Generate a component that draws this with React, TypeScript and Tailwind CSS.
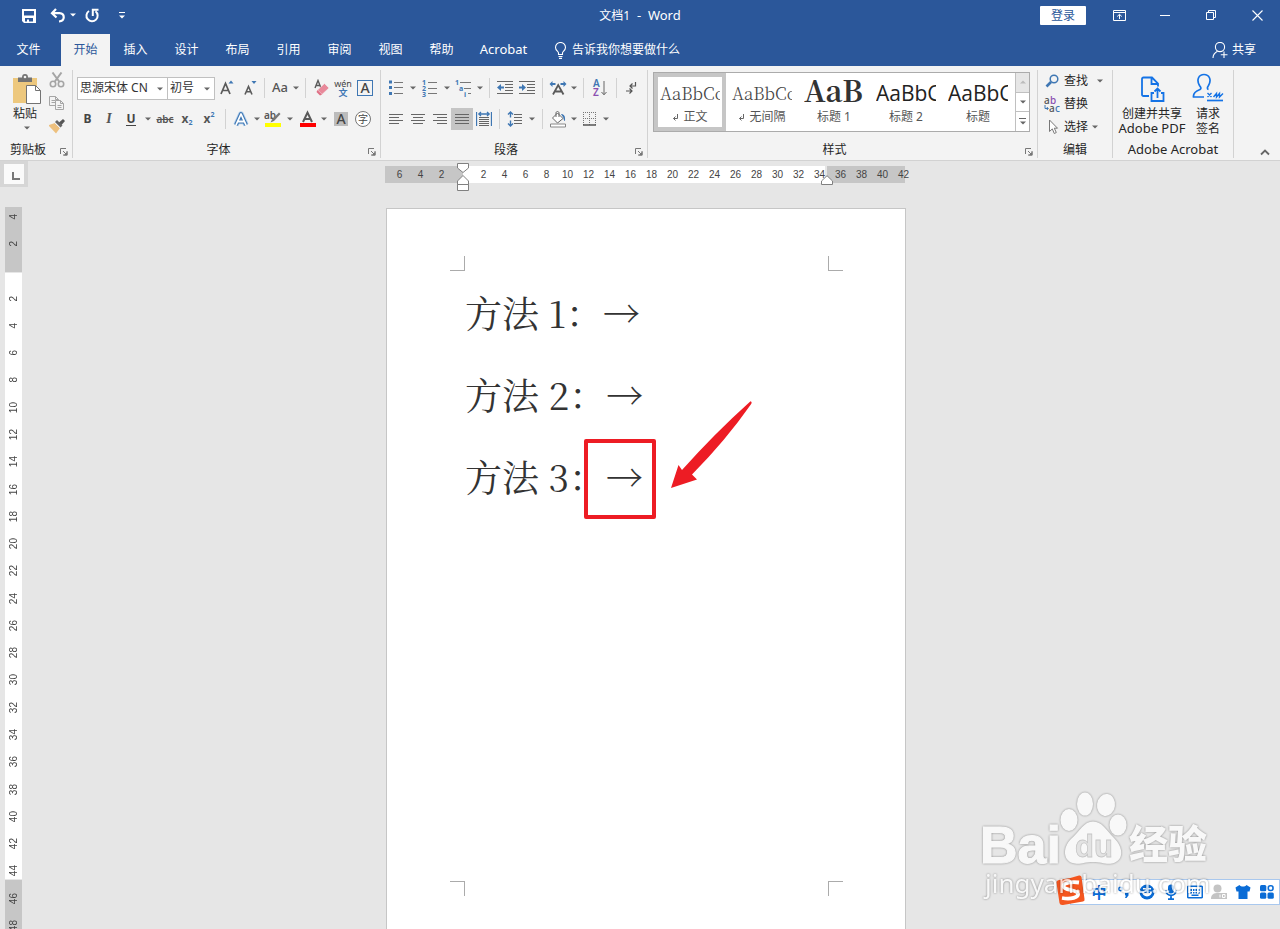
import React from "react";
import type { ReactNode } from "react";

const UI = "font-['Noto_Sans','Noto_Sans_CJK_SC',sans-serif]";

function Tri({ className = "" }: { className?: string }) {
  return (
    <svg width="6" height="4" viewBox="0 0 6 4" className={className} aria-hidden="true">
      <path d="M0 0.5h6L3 3.5z" fill="currentColor" />
    </svg>
  );
}

function Caret({ label, wide }: { label: string; wide?: boolean }) {
  return (
    <button
      aria-label={label}
      className={`flex h-[22px] shrink-0 items-center justify-center text-[#666] ${wide ? "w-3" : "w-[10px]"}`}
    >
      <Tri />
    </button>
  );
}

function Tool({ label, active, children }: { label: string; active?: boolean; children: ReactNode }) {
  return (
    <button
      aria-label={label}
      className={`flex h-[22px] w-[22px] shrink-0 items-center justify-center text-[#555] ${active ? "bg-[#c5c5c5]" : ""}`}
    >
      {children}
    </button>
  );
}

function Sep() {
  return <span className="mx-1 h-5 w-px shrink-0 bg-[#d2d2d2]" />;
}

function Group({
  title,
  width,
  launcher,
  children,
}: {
  title: string;
  width: string;
  launcher?: boolean;
  children: ReactNode;
}) {
  return (
    <section aria-label={title} className={`flex shrink-0 flex-col border-r border-[#d2d2d2] ${width}`}>
      <div className="min-h-0 flex-1">{children}</div>
      <div className="flex h-4 shrink-0 items-center">
        <span className="flex-1 text-center text-xs leading-4 text-[#262626]">{title}</span>
        {launcher && (
          <button aria-label={`${title}设置`} className="flex w-4 items-center justify-center pt-1">
            <svg width="8" height="8" viewBox="0 0 8 8" fill="none" stroke="#777">
              <path d="M0.5 6V0.5H6M3 3l3 3" />
              <path d="M7.5 3.5v4h-4z" fill="#777" stroke="none" />
              <path d="M7 3v4H3" />
            </svg>
          </button>
        )}
      </div>
    </section>
  );
}

function TitleBar() {
  return (
    <div className="grid h-[30px] grid-cols-[1fr_auto_1fr] items-center">
      <div className="flex items-center pl-[21px] text-white">
        <button aria-label="保存" className="flex w-4 justify-center">
          <svg width="16" height="16" viewBox="0 0 16 16">
            <path fill="white" fillRule="evenodd" d="M1 2h14v14H3L1 14zM3 4v4.500h10V4zM4 11v3.500h2v-2h2v2h4v-3.500z" />
          </svg>
        </button>
        <button aria-label="撤消" className="ml-[13px] flex w-4 justify-center">
          <svg width="16" height="16" viewBox="0 0 16 16" fill="none" stroke="white" strokeWidth="2.200">
            <path d="M6 2L2 6.200L6.500 10.500M2.500 6.200H9.500C15 6.500 15.500 14 9 14.500" />
          </svg>
        </button>
        <button aria-label="撤消选项" className="ml-[3px] flex w-2 justify-center">
          <Tri />
        </button>
        <button aria-label="重复" className="ml-[7px] flex w-4 justify-center">
          <svg width="16" height="16" viewBox="0 0 16 16" fill="none" stroke="white" strokeWidth="2">
            <path d="M5 4A5.600 5.600 0 1 0 11.500 4.300M8.800 9V2.700H14.500" />
          </svg>
        </button>
        <button aria-label="自定义快速访问工具栏" className="ml-[18px] flex w-2 flex-col items-center gap-[2px] pt-px">
          <span className="h-px w-[6px] bg-white" />
          <Tri />
        </button>
      </div>
      <h1 className="whitespace-pre text-[13px] leading-5 text-white">
        <span className="text-xs">文档1</span>
        {"  -  Word"}
      </h1>
      <div className="flex items-center justify-end">
        <button className="mr-[10px] h-[19px] w-[46px] rounded-[1px] bg-white text-xs leading-[19px] text-[#2b579a]">
          登录
        </button>
        <button aria-label="功能区显示选项" className="flex w-[46px] justify-center">
          <svg width="13" height="11" viewBox="0 0 13 11" fill="none" stroke="white">
            <path d="M0.500 0.500h12v10H0.500zM0.500 2.500h12M6.500 9V4.500M4.200 6.500L6.500 4.300l2.300 2.200" />
          </svg>
        </button>
        <button aria-label="最小化" className="flex h-4 w-[46px] items-center justify-center">
          <span className="h-px w-[10px] bg-white" />
        </button>
        <button aria-label="向下还原" className="flex w-[46px] justify-center">
          <svg width="10" height="10" viewBox="0 0 10 10" fill="none" stroke="white">
            <path d="M0.500 2.500h7v7h-7zM2.500 2.500v-2h7v7h-2" />
          </svg>
        </button>
        <button aria-label="关闭" className="flex w-[46px] justify-center">
          <svg width="11" height="11" viewBox="0 0 11 11" fill="none" stroke="white" strokeWidth="1.100">
            <path d="M0.500 0.500l10 10M10.500 0.500l-10 10" />
          </svg>
        </button>
      </div>
    </div>
  );
}

const TABS = ["插入", "设计", "布局", "引用", "审阅", "视图", "帮助"];

function TabBar() {
  return (
    <nav className="mt-1 flex h-8 items-stretch text-xs text-white">
      <button className="w-[57px]">文件</button>
      <button className="ml-1 w-[49px] bg-[#f3f3f3] text-[#2b579a]">开始</button>
      {TABS.map((t) => (
        <button key={t} className="w-[51px]">
          {t}
        </button>
      ))}
      <button className="w-[73px] text-[13px]">Acrobat</button>
      <button className="ml-[14px] flex items-center gap-[5px]">
        <svg width="13" height="17" viewBox="0 0 13 17" fill="none" stroke="white" strokeWidth="1.100">
          <path d="M4.500 12.500V11C4.500 9.500 1.500 8.500 1.500 5.500a5 5 0 0 1 10 0C11.500 8.500 8.500 9.500 8.500 11v1.500zM4.500 14.500h4M5 16.400h3" />
        </svg>
        告诉我你想要做什么
      </button>
      <button className="mr-6 ml-auto flex items-center gap-1">
        <svg width="16" height="17" viewBox="0 0 16 17" fill="none" stroke="white" strokeWidth="1.100">
          <circle cx="8" cy="5" r="4.600" />
          <path d="M1 16c0-4 2-5.500 4.500-6.800M12 9.500V16M8.800 12.700h6.700" />
        </svg>
        共享
      </button>
    </nav>
  );
}

function ClipboardGroup() {
  return (
    <Group title="剪贴板" width="w-[73px]" launcher>
      <div className="flex">
        <button className="flex w-[49px] flex-col items-center pt-1 pl-1 text-xs text-[#262626]">
          <svg width="30" height="31" viewBox="0 0 30 31">
            <path d="M1 4h24v25H1z" fill="#edc87e" />
            <path d="M6 8V3.500h4C10 1 11 0 13 0s3 1 3 3.500h4V8z" fill="#737373" />
            <circle cx="13" cy="3" r="1.300" fill="#f3f3f3" />
            <path d="M14.500 11.500h9l5 5v13h-14z" fill="white" stroke="#737373" />
            <path d="M23.500 11.500v5h5" fill="none" stroke="#737373" />
          </svg>
          <span className="pr-[3px] leading-[18px]">粘贴</span>
          <Tri className="mt-[3px] text-[#666]" />
        </button>
        <div className="flex flex-col gap-[7px] pt-[2px]">
          <button aria-label="剪切">
            <svg width="16" height="16" viewBox="0 0 16 16" fill="none" stroke="#a5a5a5" strokeWidth="1.600">
              <path d="M3.500 0.500L10.500 10M12.500 0.500L5.500 10" strokeWidth="2" />
              <circle cx="4" cy="12" r="2.700" />
              <circle cx="12" cy="12" r="2.700" />
            </svg>
          </button>
          <button aria-label="复制">
            <svg width="16" height="16" viewBox="0 0 16 16" fill="#f3f3f3" stroke="#a5a5a5">
              <path d="M0.500 1.500h6l3 3v6h-9zM6.500 1.500v3h3M2.500 5.500h4M2.500 7.500h4" />
              <path d="M6.500 5.500h5l3 3v6h-8zM11.500 5.500v3h3M8.500 10.500h4M8.500 12.500h4" />
            </svg>
          </button>
          <button aria-label="格式刷">
            <svg width="17" height="16" viewBox="0 0 17 16">
              <path d="M0 7l6-2 5 5-4 5.500L0 8z" fill="#edc07e" />
              <path d="M6 4l2-2 5.500 5.500-2 2z" fill="#666" />
              <path d="M10 4.500L14 1l2 2-3.500 4z" fill="#555" />
              <path d="M6 5l5 5" stroke="#f3f3f3" />
            </svg>
          </button>
        </div>
      </div>
    </Group>
  );
}

function ListSelect({ label, value, width }: { label: string; value: string; width: string }) {
  return (
    <div className={`relative flex h-[23px] items-center border border-[#c0c0c0] bg-white ${width}`}>
      <select
        aria-label={label}
        className="h-5 w-full appearance-none bg-transparent pr-3 pl-[2px] text-xs leading-4 text-[#333]"
        defaultValue={value}
      >
        <option>{value}</option>
      </select>
      <Tri className="pointer-events-none absolute top-[9px] right-1 text-[#666]" />
    </div>
  );
}

function FontGroup() {
  return (
    <Group title="字体" width="w-[308px]" launcher>
      <div className="flex flex-col gap-2 pt-[6px] pl-1">
        <div className="flex h-6 items-center">
          <ListSelect label="字体" value="思源宋体 CN" width="w-[91px]" />
          <ListSelect label="字号" value="初号" width="-ml-px w-12" />
          <button aria-label="增大字号" className="flex w-6 justify-center">
            <svg width="14" height="18" viewBox="0 0 14 18">
              <path d="M1 15L5.500 4.500L10 15M2.700 11.500h5.600" fill="none" stroke="#5a5a5a" strokeWidth="1.700" />
              <path d="M8.500 4.500h5L11 1.500z" fill="#3f77b3" />
            </svg>
          </button>
          <button aria-label="减小字号" className="flex w-[21px] justify-center">
            <svg width="14" height="18" viewBox="0 0 14 18">
              <path d="M2 15.500L5.500 7.500L9 15.500M3.200 12.700h4.600" fill="none" stroke="#5a5a5a" strokeWidth="1.600" />
              <path d="M8.500 2h5L11 5z" fill="#3f77b3" />
            </svg>
          </button>
          <Sep />
          <Tool label="更改大小写">
            <span className="text-[13px] font-medium text-[#555]">Aa</span>
          </Tool>
          <Caret label="大小写选项" />
          <Sep />
          <Tool label="清除所有格式">
            <svg width="18" height="18" viewBox="0 0 18 18">
              <path d="M3 9L6 1.500L9 9M4 6.500h4" fill="none" stroke="#5a5a5a" strokeWidth="1.400" />
              <path d="M12.500 4.500l4.500 4.500-7 6.500-4.500-4.500z" fill="#e8899a" stroke="#f3f3f3" strokeWidth="0.600" />
              <path d="M5.500 11l4.500 4.500-2 1L4.500 13z" fill="#df6f84" />
            </svg>
          </Tool>
          <Tool label="拼音指南">
            <span className="flex flex-col items-center">
              <span className="text-[9px] leading-[9px] text-[#444]">wén</span>
              <span className="text-[9px] leading-[9px] font-bold text-[#3f77b3]">文</span>
            </span>
          </Tool>
          <Tool label="字符边框">
            <span className="flex h-4 w-4 items-center justify-center border border-[#3f77b3] text-sm leading-4 font-medium text-[#444]">
              A
            </span>
          </Tool>
        </div>
        <div className="flex h-[22px] items-center">
          <button aria-label="加粗" className="w-[21px] text-xs font-bold text-[#444]">
            B
          </button>
          <Tool label="倾斜">
            <span className="font-['Liberation_Serif',serif] text-sm font-bold italic">I</span>
          </Tool>
          <Tool label="下划线">
            <span className="border-b border-[#444] text-xs leading-3 font-bold text-[#444]">U</span>
          </Tool>
          <Caret label="下划线选项" wide />
          <Tool label="删除线">
            <span className="text-[10px] font-semibold line-through">abc</span>
          </Tool>
          <Tool label="下标">
            <span className="flex items-end text-xs leading-4 font-bold">
              x<span className="text-[7px] leading-[8px] text-[#3f77b3]">2</span>
            </span>
          </Tool>
          <Tool label="上标">
            <span className="flex items-start text-xs leading-4 font-bold">
              x<span className="text-[7px] leading-[8px] text-[#3f77b3]">2</span>
            </span>
          </Tool>
          <span className="w-px" />
          <Sep />
          <Tool label="文本效果">
            <svg width="18" height="18" viewBox="0 0 18 18" fill="none" strokeLinejoin="round">
              <path d="M4 15L9 4L14 15M6 11.500h6" stroke="#b5d0ec" strokeWidth="5.500" />
              <path d="M4 15L9 4L14 15M6 11.500h6" stroke="#3f77b3" strokeWidth="4" />
              <path d="M4 15L9 4L14 15M6 11.500h6" stroke="white" strokeWidth="1.800" />
            </svg>
          </Tool>
          <Caret label="文本效果选项" />
          <Tool label="突出显示">
            <svg width="18" height="18" viewBox="0 0 18 18">
              <text x="0" y="9" fontSize="10" fontWeight="600" fill="#555">ab</text>
              <path d="M15 2.500l1.500 1.500-6.500 7-3.500 1.500 1.500-3z" fill="#777" />
              <path d="M1 13h16v4H1z" fill="#ff0" />
            </svg>
          </Tool>
          <Caret label="突出显示颜色" wide />
          <Tool label="字体颜色">
            <svg width="18" height="18" viewBox="0 0 18 18">
              <path d="M5 12L9.500 2.500L14 12M6.500 9h6" fill="none" stroke="#5a5a5a" strokeWidth="2" />
              <path d="M2 13h16v4H2z" fill="#f00" />
            </svg>
          </Tool>
          <Caret label="字体颜色选项" wide />
          <Tool label="字符底纹">
            <span className="flex h-[14px] w-[14px] items-center justify-center bg-[#bcbcbc] text-sm leading-[14px] font-medium text-[#444]">
              A
            </span>
          </Tool>
          <Tool label="带圈字符">
            <span className="flex h-4 w-4 items-center justify-center rounded-full border border-[#777] bg-white text-[10px] leading-3 text-[#444]">
              字
            </span>
          </Tool>
        </div>
      </div>
    </Group>
  );
}

function Lines({ d }: { d: string }) {
  return (
    <svg width="16" height="14" viewBox="0 0 16 14" fill="none" stroke="#666">
      <path d={d} />
    </svg>
  );
}

function ParagraphGroup() {
  return (
    <Group title="段落" width="w-[267px]" launcher>
      <div className="flex flex-col gap-2 pt-[6px] pl-1">
        <div className="flex h-6 items-center">
          <Tool label="项目符号">
            <svg width="14" height="16" viewBox="0 0 14 16">
              <path d="M0 0.500h3v3h-3zM0 6h3v3h-3zM0 12h3v3h-3z" fill="#3f77b3" />
              <path d="M5 2.500h9M5 7.500h9M5 13.500h9" stroke="#777" />
            </svg>
          </Tool>
          <Caret label="项目符号选项" wide />
          <Tool label="编号">
            <svg width="16" height="18" viewBox="0 0 16 18">
              <g fontSize="7" fontWeight="700" fill="#3f77b3">
                <text x="0" y="6">1</text>
                <text x="0" y="12">2</text>
                <text x="0" y="17.500">3</text>
              </g>
              <path d="M6 3.500h9M6 9.500h9M6 14.500h9" stroke="#777" />
            </svg>
          </Tool>
          <Caret label="编号选项" wide />
          <Tool label="多级列表">
            <svg width="18" height="18" viewBox="0 0 18 18">
              <g fontSize="7" fontWeight="700" fill="#3f77b3">
                <text x="0" y="6">1</text>
                <text x="4" y="12">a</text>
                <text x="9" y="17.500">i</text>
              </g>
              <path d="M5 3.500h11M9 9.500h7M13 14.500h3" stroke="#777" />
            </svg>
          </Tool>
          <Caret label="多级列表选项" />
          <Sep />
          <Tool label="减少缩进量">
            <svg width="16" height="14" viewBox="0 0 16 14">
              <path d="M0 0.500h16M8 3.500h8M8 6.500h8M8 9.500h8M0 12.500h16" stroke="#666" />
              <path d="M0 6.500L4 3v2.500h3v2H4V10z" fill="#3f77b3" />
            </svg>
          </Tool>
          <Tool label="增加缩进量">
            <svg width="16" height="14" viewBox="0 0 16 14">
              <path d="M0 0.500h16M8 3.500h8M8 6.500h8M8 9.500h8M0 12.500h16" stroke="#666" />
              <path d="M7 6.500L3 3v2.500H0v2h3V10z" fill="#3f77b3" />
            </svg>
          </Tool>
          <Sep />
          <Tool label="中文版式">
            <svg width="18" height="16" viewBox="0 0 18 16">
              <path d="M4 14.500L9.200 5L14.500 14.500M6 11.500h6.500" fill="none" stroke="#5a5a5a" strokeWidth="1.800" />
              <path d="M0.500 4l3-3v2h3v2h-3v2zM17.500 4l-3-3v2h-3v2h3v2z" fill="#3f77b3" />
            </svg>
          </Tool>
          <Caret label="中文版式选项" />
          <Sep />
          <button aria-label="排序" className="flex w-6 justify-center">
            <svg width="16" height="18" viewBox="0 0 16 18">
              <text x="1" y="8" fontSize="10" fontWeight="600" fill="#3f77b3">A</text>
              <text x="1" y="17" fontSize="10" fontWeight="600" fill="#8a4fb0">Z</text>
              <path d="M12 2v13.500M9.500 13l2.500 2.800L14.500 13" fill="none" stroke="#666" />
            </svg>
          </button>
          <Sep />
          <button aria-label="显示编辑标记" className="flex w-5 justify-center">
            <svg width="12" height="14" viewBox="0 0 12 14" fill="none" stroke="#555" strokeWidth="1.200">
              <path d="M10.500 1v4H5M7.500 2.500L5 5l2.500 2.500M1 10h6M4.500 7.500L7 10l-2.500 2.500" />
            </svg>
          </button>
        </div>
        <div className="flex h-[22px] items-center">
          <Tool label="左对齐">
            <Lines d="M1 2.500h14M1 5.500h10M1 8.500h14M1 11.500h10" />
          </Tool>
          <Tool label="居中">
            <Lines d="M1 2.500h14M3 5.500h10M1 8.500h14M3 11.500h10" />
          </Tool>
          <Tool label="右对齐">
            <Lines d="M1 2.500h14M5 5.500h10M1 8.500h14M5 11.500h10" />
          </Tool>
          <Tool label="两端对齐" active>
            <Lines d="M1 2.500h14M1 5.500h14M1 8.500h14M1 11.500h14" />
          </Tool>
          <Tool label="分散对齐">
            <svg width="16" height="16" viewBox="0 0 16 16" fill="none" stroke="#666">
              <path d="M3 6.500h10M3 8.500h10M3 10.500h10M3 12.500h10M3 14.500h10" />
              <path d="M0.500 1v14M15.500 1v14M3 3h10M5 1L2.800 3L5 5M11 1l2.200 2L11 5" stroke="#3f77b3" strokeWidth="1.300" />
            </svg>
          </Tool>
          <Sep />
          <Tool label="行和段落间距">
            <svg width="16" height="16" viewBox="0 0 16 16" fill="none">
              <path d="M3.500 1v5.500M1 3.500L3.500 1L6 3.500M3.500 15V9.500M1 12.500L3.500 15L6 12.500" stroke="#3f77b3" strokeWidth="1.400" />
              <path d="M7 3.500h8M7 6.500h8M7 9.500h8M7 12.500h8" stroke="#666" />
            </svg>
          </Tool>
          <Caret label="间距选项" wide />
          <Sep />
          <Tool label="底纹">
            <svg width="18" height="18" viewBox="0 0 18 18" fill="none" stroke="#666">
              <path d="M8.500 3L14 8.500L8.500 13L3.500 8z" fill="white" />
              <path d="M7 7V3c0-2 3-2 3 0v4" />
              <path d="M12 4c3 0 4.500 2 4 7-1 0-1.500-1.500-1.500-3z" fill="#3f77b3" stroke="none" />
              <path d="M1.500 14h15v3h-15z" fill="white" stroke="#888" />
            </svg>
          </Tool>
          <Caret label="底纹颜色" />
          <Tool label="边框">
            <svg width="14" height="14" viewBox="0 0 14 14" fill="none" stroke="#777">
              <path d="M0.500 0v13M6.500 0v13M12.500 0v13M0 0.500h13M0 6.500h13" strokeDasharray="1 1" />
              <path d="M0 13h13" stroke="#555" strokeWidth="1.500" />
            </svg>
          </Tool>
          <Caret label="边框选项" />
        </div>
      </div>
    </Group>
  );
}

const SERIF = "font-['Noto_Serif_CJK_SC','Liberation_Serif',serif]";

const STYLES = [
  { name: "正文", mark: true, sample: "AaBbCc", look: `${SERIF} text-[17px] font-light text-[#444]` },
  { name: "无间隔", mark: true, sample: "AaBbCc", look: `${SERIF} text-[17px] font-light text-[#444]` },
  { name: "标题 1", mark: false, sample: "AaB", look: `${SERIF} pb-[5px] text-[29px] font-bold text-[#333]` },
  { name: "标题 2", mark: false, sample: "AaBbC", look: "font-['Open_Sans',sans-serif] text-[21px] text-[#222]" },
  { name: "标题", mark: false, sample: "AaBbC", look: "font-['Open_Sans',sans-serif] text-[21px] text-[#222]" },
];

function StylesGroup() {
  return (
    <Group title="样式" width="w-[390px]" launcher>
      <div className="mt-[2px] mr-[7px] ml-[5px] flex h-[60px] border border-[#ababab] bg-white">
        {STYLES.map((s, i) => (
          <button
            key={s.name}
            className={`flex w-[72px] shrink-0 flex-col items-center justify-start border-4 ${i === 0 ? "border-[#c6c6c6]" : "border-white"}`}
          >
            <span
              className={`flex h-[31px] w-[60px] items-center overflow-hidden leading-8 whitespace-nowrap ${s.look}`}
            >
              {s.sample}
            </span>
            <span className="flex h-[18px] items-center gap-1 text-xs text-[#555]">
              {s.mark && (
                <svg width="7" height="7" viewBox="0 0 7 7" fill="none" stroke="#666">
                  <path d="M5.500 0v4.500H1.500M3.500 2.500L1.500 4.500l2 2" />
                </svg>
              )}
              {s.name}
            </span>
          </button>
        ))}
        <div className="ml-px flex flex-1 flex-col border-l border-[#c0c0c0] text-[#666]">
          <button aria-label="上一行" className="flex flex-1 items-center justify-center bg-[#e6e6e6] text-[#bbb]">
            <Tri className="rotate-180" />
          </button>
          <button aria-label="下一行" className="flex flex-1 items-center justify-center border-y border-[#c0c0c0]">
            <Tri />
          </button>
          <button aria-label="其他样式" className="flex flex-1 flex-col items-center justify-center gap-[2px]">
            <span className="h-px w-[7px] bg-[#666]" />
            <Tri />
          </button>
        </div>
      </div>
    </Group>
  );
}

function EditingGroup() {
  return (
    <Group title="编辑" width="w-[75px]">
      <div className="flex flex-col gap-[3px] pt-px pl-[6px] text-xs leading-5 text-[#262626]">
        <button className="flex h-5 items-center gap-1">
          <svg width="16" height="14" viewBox="0 0 16 14" fill="none" stroke="#3f77b3">
            <circle cx="10" cy="5" r="3.800" strokeWidth="1.500" />
            <path d="M7 8l-4.500 4.500" strokeWidth="2.600" />
          </svg>
          查找
          <Tri className="ml-[5px] text-[#666]" />
        </button>
        <button className="flex h-5 items-center gap-1">
          <svg width="16" height="17" viewBox="0 0 16 17" fontSize="10" fontWeight="500">
            <text x="0" y="7.500" fill="#555">a</text>
            <text x="6" y="7.500" fill="#8a4fb0">b</text>
            <text x="5" y="16" fill="#555">a</text>
            <text x="11" y="16" fill="#3f77b3">c</text>
            <path d="M1 9v3.500h3M2.800 11l1.500 1.500L2.800 14" fill="none" stroke="#3f77b3" />
          </svg>
          替换
        </button>
        <button className="flex h-5 items-center gap-1">
          <svg width="16" height="16" viewBox="0 0 16 16">
            <path d="M5.500 1v11.500l2.800-2.600 2 4.600 2-1-2-4.300H13.500z" fill="white" stroke="#777" />
          </svg>
          选择
          <Tri className="text-[#666]" />
        </button>
      </div>
    </Group>
  );
}

function AcrobatGroup() {
  return (
    <section aria-label="Adobe Acrobat" className="flex w-[121px] shrink-0 flex-col border-r border-[#d2d2d2]">
      <div className="flex flex-1 text-xs leading-[15px] text-[#262626]">
        <button className="flex w-[78px] flex-col items-center pt-[5px]">
          <svg width="26" height="29" viewBox="-1 0 26 29" fill="none" stroke="#1473e6" strokeWidth="1.800">
            <path d="M9 21H3.500c-1 0-1.500-.5-1.500-1.500V4c0-1 .5-1.500 1.500-1.500H12L18 8.500v3M11.500 3v6H18" />
            <path d="M14 18h-2.500v8h12v-8H21M17.500 23v-9M14.500 16.500l3-3 3 3" />
          </svg>
          <span className="mt-[2px]">创建并共享</span>
          <span className="text-[13px]">Adobe PDF</span>
        </button>
        <button className="flex w-[34px] flex-col items-center pt-[3px]">
          <svg width="32" height="31" viewBox="0 0 32 31" fill="none" stroke="#1473e6" strokeWidth="1.700">
            <path d="M12 24H1.500C1 20 4 18 8 16.500c1.500-1 1-2-.5-4C4 6.500 7 1.500 12 1.500S20 6.500 16.500 12.500c-1.500 2-1.500 3.500 0 4" />
            <path d="M15 27.500h16" />
            <path d="M15.500 20l4 4M19.500 20l-4 4M21.500 24l3-3.500v3.500l3-3.500v3.500l3.500-3.500" strokeWidth="1.400" />
          </svg>
          <span className="mt-[2px]">请求</span>
          <span>签名</span>
        </button>
      </div>
      <div className="h-4 text-center text-[13px] leading-[15px] text-[#262626]">Adobe Acrobat</div>
    </section>
  );
}

function Ribbon() {
  return (
    <div className="flex h-[95px] shrink-0 border-b border-[#d2d2d2] bg-[#f3f3f3] pt-1">
      <div className="flex h-[88px] w-full">
        <ClipboardGroup />
        <FontGroup />
        <ParagraphGroup />
        <StylesGroup />
        <EditingGroup />
        <AcrobatGroup />
        <button aria-label="折叠功能区" className="mr-[10px] mb-[2px] ml-auto self-end">
          <svg width="10" height="7" viewBox="0 0 10 7" fill="none" stroke="#666" strokeWidth="1.800">
            <path d="M1 5.500l4-4 4 4" />
          </svg>
        </button>
      </div>
    </div>
  );
}

const H_TICKS = [6, 4, 2, 0, ...Array.from({ length: 21 }, (_, i) => (i + 1) * 2)];
const V_TICKS = [4, 2, 0, ...Array.from({ length: 24 }, (_, i) => (i + 1) * 2)];

function HorizontalRuler() {
  return (
    <div className="relative mr-[2px] flex h-[17px] w-[520px] shrink-0 text-[10px] text-[#444]">
      <div className="w-[78px] bg-[#c6c6c6]" />
      <div className="flex-1 bg-white" />
      <div className="ml-[2px] w-[78px] bg-[#c6c6c6]" />
      <div className="absolute inset-y-0 left-1 flex items-center font-['Liberation_Sans',sans-serif]">
        {H_TICKS.map((n, i) => (
          <span key={i} className="w-[21px] text-center">
            {n === 0 ? "" : n}
          </span>
        ))}
      </div>
      <svg className="absolute -top-[3px] left-[72px]" width="12" height="28" viewBox="0 0 12 28" fill="white" stroke="#808080">
        <path d="M0.500 0.500h11v4.500L6 9.500L0.500 5z" />
        <path d="M0.500 21.500V18L6 12.500L11.500 18v3.500zM0.500 21.500h11v6h-11z" />
      </svg>
      <svg className="absolute top-[9px] left-[436px]" width="12" height="11" viewBox="0 0 12 11" fill="white" stroke="#808080">
        <path d="M0.500 9.500V6L6 0.700L11.500 6v3.500z" />
      </svg>
    </div>
  );
}

function VerticalRuler() {
  return (
    <div className="relative mt-5 ml-[5px] min-h-0 w-[17px] flex-1 overflow-hidden">
      <div className="flex h-full flex-col">
        <div className="h-[65px] shrink-0 bg-[#c6c6c6]" />
        <div className="mt-px h-[606px] shrink-0 bg-white" />
        <div className="mt-px flex-1 bg-[#c6c6c6]" />
      </div>
      <div className="absolute inset-x-0 -top-1 grid h-[736px] auto-rows-fr font-['Liberation_Sans',sans-serif] text-[10px] text-[#444]">
        {V_TICKS.map((n, i) => (
          <span key={i} className="flex items-center justify-center pl-px">
            <span className="rotate-180 leading-3 [writing-mode:vertical-rl]">{n === 0 ? "" : n}</span>
          </span>
        ))}
      </div>
    </div>
  );
}

function DocumentPage() {
  return (
    <article className="relative mt-[25px] flex w-[520px] flex-1 flex-col border border-b-0 border-[#c6c6c6] bg-white pt-[47px] pb-[33px]">
      <div className="flex justify-between pr-[62px] pl-[63px]">
        <span className="h-[15px] w-[15px] border-r border-b border-[#ababab]" />
        <span className="h-[15px] w-[15px] border-b border-l border-[#ababab]" />
      </div>
      <div className="flex-1 pl-[78px] font-['Noto_Serif_CJK_SC','Liberation_Serif','Noto_Sans_CJK_SC',serif] text-[37px] leading-[82px] text-[#333] tabular-nums">
        {[1, 2, 3].map((n) => (
          <p key={n} className="relative h-[82px] whitespace-nowrap">
            方法 {n}：→
            {n === 3 && (
              <span className="absolute top-1 left-[119px] h-20 w-[72px] rounded-xs border-4 border-[#ed1c24]" />
            )}
          </p>
        ))}
      </div>
      <svg className="absolute top-[191px] left-[283px]" width="84" height="90" viewBox="0 0 84 90">
        <path
          d="M80.500 1.200Q82.500 2 81 4.200Q56 40 22 74.500L27 79.500L1 88L8.500 65L12 70Q44 34 80.500 1.200Z"
          fill="#ed1c24"
        />
      </svg>
      <div className="flex justify-between pr-[62px] pl-[63px]">
        <span className="h-[15px] w-[15px] border-t border-r border-[#ababab]" />
        <span className="h-[15px] w-[15px] border-t border-l border-[#ababab]" />
      </div>
    </article>
  );
}

function InputBar() {
  const cell = "flex w-6 items-center justify-center";
  return (
    <div className="absolute right-0 bottom-6 flex h-[26px] items-stretch border border-[#a9c8ee] bg-white pl-4 text-[#0a6cd6]">
      <svg className="absolute -top-[6px] -left-4" width="32" height="34" viewBox="0 0 32 34">
        <path d="M4 6Q14 5 24 1.500Q26 1 26.500 3L29.500 25Q30 27 28 27.500L8 31Q5 31.500 4.500 29L1.500 9Q1.200 6.500 4 6Z" fill="#f4561f" />
        <path d="M24 8.500C17 7.500 8 8.500 8.500 12.500S22 15.500 23 19.500 16 25.500 7 24" fill="none" stroke="white" strokeWidth="3.800" />
      </svg>
      <button className={`${cell} text-[15px] leading-4 font-bold`}>中</button>
      <button aria-label="中文标点" className={cell}>
        <svg width="14" height="14" viewBox="0 0 14 14">
          <circle cx="4.500" cy="4" r="1.700" fill="none" stroke="currentColor" strokeWidth="1.400" />
          <path d="M9 7.500h3.500V10.500L10.500 13H9l1-2.500H9z" fill="currentColor" />
        </svg>
      </button>
      <button aria-label="表情" className={cell}>
        <svg width="16" height="16" viewBox="0 0 16 16">
          <circle cx="8" cy="8" r="7.500" fill="currentColor" />
          <path d="M3 7.500h10a5 5 0 0 1-10 0zM4 4h3v1.500H4zM9 4h3v1.500H9z" fill="white" />
          <path d="M5 7.500h6v1.500H5z" fill="currentColor" />
        </svg>
      </button>
      <button aria-label="语音" className={cell}>
        <svg width="14" height="16" viewBox="0 0 14 16" fill="none" stroke="currentColor" strokeWidth="1.800">
          <rect x="4" y="0.500" width="6" height="9" rx="3" fill="currentColor" stroke="none" />
          <path d="M2 6.500c0 6.500 10 6.500 10 0M7 11.500v3M4 15.100h6" />
        </svg>
      </button>
      <button aria-label="软键盘" className={cell}>
        <svg width="16" height="14" viewBox="0 0 16 14">
          <rect x="0.700" y="1.200" width="14.600" height="11.600" rx="1" fill="none" stroke="currentColor" strokeWidth="1.600" />
          <path d="M3 4h2v2H3zM6 4h1.500v2H6zM8.500 4H10v2H8.500zM11 4h2v2h-2zM3 7h2v1.500H3zM6 7h1.500v1.500H6zM8.500 7H10v1.500H8.500zM11 7h2v1.500h-2zM4.500 9.500h7v1.500h-7z" fill="currentColor" />
        </svg>
      </button>
      <button aria-label="账户" className={cell}>
        <svg width="16" height="16" viewBox="0 0 16 16">
          <circle cx="6.500" cy="4.500" r="4" fill="#c4c4c4" />
          <path d="M0 15c0-5 3-6 7-6h9v6z" fill="#c4c4c4" />
          <path d="M9 10.500v3M11.500 10.500H14v3h-2.500z" stroke="white" fill="none" />
        </svg>
      </button>
      <button aria-label="皮肤" className={cell}>
        <svg width="16" height="14" viewBox="0 0 16 14">
          <path d="M4.500 0C6 2 10 2 11.500 0L15.500 2.500L14.500 6.500H12.500V14H3.500V6.500H1.500L0.500 2.500z" fill="currentColor" />
        </svg>
      </button>
      <button aria-label="工具箱" className={cell}>
        <svg width="14" height="14" viewBox="0 0 14 14" fill="currentColor">
          <rect width="6.300" height="6.300" rx="1.500" />
          <rect y="7.500" width="6.300" height="6.300" rx="1.500" />
          <rect x="7.500" y="7.500" width="6.300" height="6.300" rx="1.500" />
          <rect x="8.300" y="0.800" width="4.700" height="4.700" rx="2" fill="none" stroke="currentColor" strokeWidth="1.600" />
        </svg>
      </button>
    </div>
  );
}

function BaiduMark() {
  return (
    <svg
      className="pointer-events-none absolute right-[65px] bottom-[24px] opacity-75 drop-shadow-[0_0_1px_#0008]"
      width="240"
      height="120"
      viewBox="0 0 240 120"
      fill="white"
    >
      <text x="5" y="78" fontSize="52" stroke="white" className="font-['Liberation_Sans',sans-serif] font-bold">Bai</text>
      <ellipse cx="94" cy="35" rx="8.500" ry="11" />
      <ellipse cx="110" cy="19" rx="8" ry="11.500" />
      <ellipse cx="131" cy="20" rx="9" ry="11" transform="rotate(8 131 20)" />
      <ellipse cx="143" cy="40" rx="8.500" ry="10.500" />
      <path d="M118 36.500C127 36.500 131 45 139 53C149 63 149 76 137 78.500C130 79.500 126 77 118 77S106 79.500 100 78.500C88 77 87 63 96 54C105 46 109 36.500 118 36.500Z" />
      <text x="100" y="72" fontSize="31" fill="#e2e2e2" stroke="#bdbdbd" strokeWidth="0.800" className="font-['Liberation_Sans',sans-serif] font-bold">du</text>
      <text x="154" y="73" fontSize="39" className="font-['Noto_Sans_CJK_SC',sans-serif] font-black">经验</text>
      <text x="10" y="108" fontSize="26" className="font-['Noto_Sans',sans-serif]">jingyan.baidu.com</text>
    </svg>
  );
}

export default function App() {
  return (
    <div className={`relative flex h-screen flex-col overflow-hidden bg-[#e6e6e6] ${UI}`}>
      <header className="shrink-0 bg-[#2b579a]">
        <TitleBar />
        <TabBar />
      </header>
      <Ribbon />
      <main className="flex min-h-0 flex-1">
        <div className="flex w-7 shrink-0 flex-col">
          <button aria-label="制表符" className="flex h-[26px] items-center justify-center bg-[#d6d6d6]">
            <span className="flex h-5 w-5 items-center justify-center bg-[#fafafa]">
              <span className="mt-1 ml-1 h-2 w-2 border-b-2 border-l-2 border-[#777]" />
            </span>
          </button>
          <VerticalRuler />
        </div>
        <div className="flex min-w-0 flex-1 flex-col items-center pt-[5px] pr-4">
          <HorizontalRuler />
          <DocumentPage />
        </div>
      </main>
      <InputBar />
      <BaiduMark />
    </div>
  );
}
